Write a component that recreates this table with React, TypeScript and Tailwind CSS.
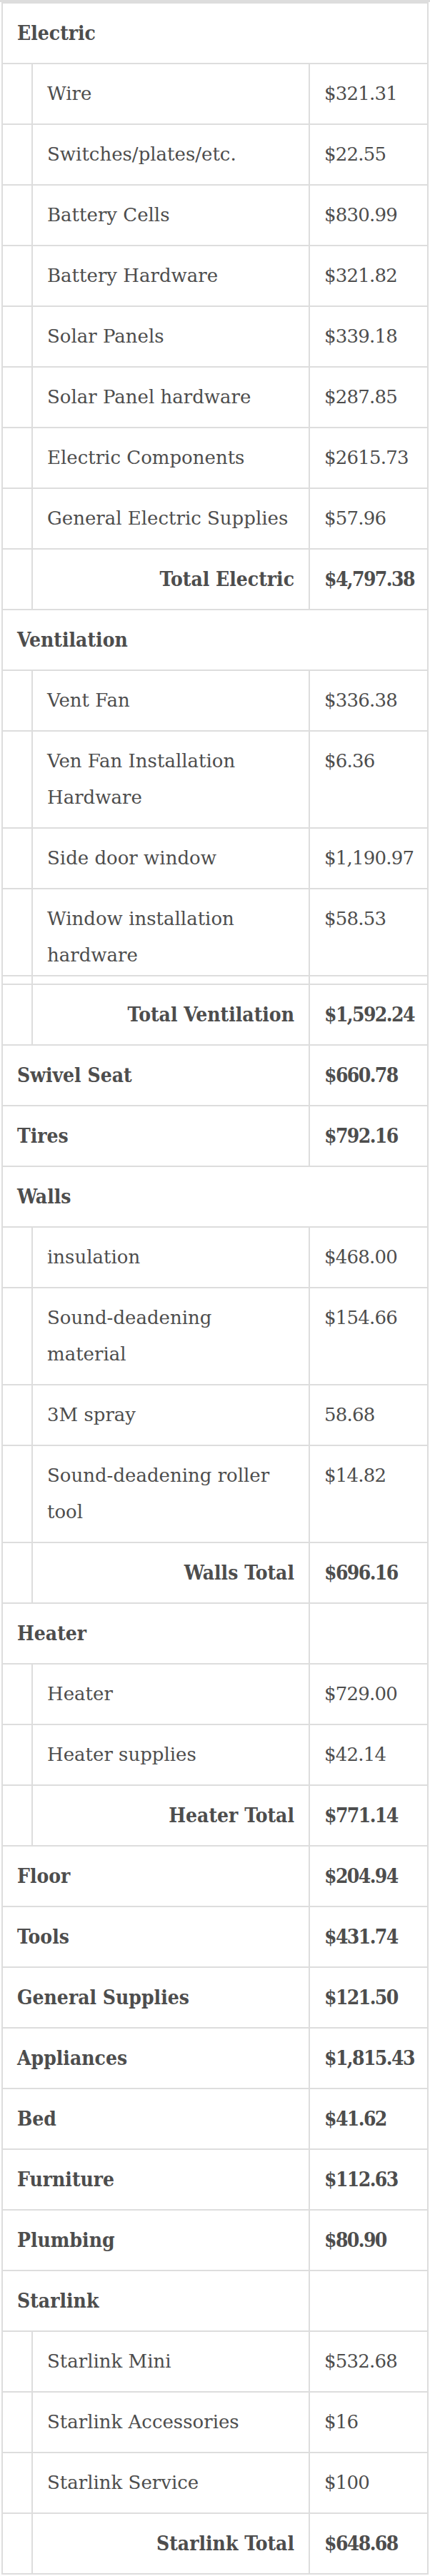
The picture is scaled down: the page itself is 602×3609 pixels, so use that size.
type Row =
  | { kind: "section"; label: string; valueCell?: boolean }
  | { kind: "item"; label: string; value: string; tail?: boolean }
  | { kind: "total"; label: string; value: string }
  | { kind: "single"; label: string; value: string }
  | { kind: "spacer" };

const ROWS: Row[] = [
  { kind: "section", label: "Electric" },
  { kind: "item", label: "Wire", value: "$321.31" },
  { kind: "item", label: "Switches/plates/etc.", value: "$22.55" },
  { kind: "item", label: "Battery Cells", value: "$830.99" },
  { kind: "item", label: "Battery Hardware", value: "$321.82" },
  { kind: "item", label: "Solar Panels", value: "$339.18" },
  { kind: "item", label: "Solar Panel hardware", value: "$287.85" },
  { kind: "item", label: "Electric Components", value: "$2615.73" },
  { kind: "item", label: "General Electric Supplies", value: "$57.96" },
  { kind: "total", label: "Total Electric", value: "$4,797.38" },
  { kind: "section", label: "Ventilation" },
  { kind: "item", label: "Vent Fan", value: "$336.38" },
  { kind: "item", label: "Ven Fan Installation Hardware", value: "$6.36" },
  { kind: "item", label: "Side door window", value: "$1,190.97" },
  { kind: "item", label: "Window installation hardware", value: "$58.53", tail: true },
  { kind: "spacer" },
  { kind: "total", label: "Total Ventilation", value: "$1,592.24" },
  { kind: "single", label: "Swivel Seat", value: "$660.78" },
  { kind: "single", label: "Tires", value: "$792.16" },
  { kind: "section", label: "Walls" },
  { kind: "item", label: "insulation", value: "$468.00" },
  { kind: "item", label: "Sound-deadening material", value: "$154.66" },
  { kind: "item", label: "3M spray", value: "58.68" },
  { kind: "item", label: "Sound-deadening roller tool", value: "$14.82" },
  { kind: "total", label: "Walls Total", value: "$696.16" },
  { kind: "section", label: "Heater", valueCell: true },
  { kind: "item", label: "Heater", value: "$729.00" },
  { kind: "item", label: "Heater supplies", value: "$42.14" },
  { kind: "total", label: "Heater Total", value: "$771.14" },
  { kind: "single", label: "Floor", value: "$204.94" },
  { kind: "single", label: "Tools", value: "$431.74" },
  { kind: "single", label: "General Supplies", value: "$121.50" },
  { kind: "single", label: "Appliances", value: "$1,815.43" },
  { kind: "single", label: "Bed", value: "$41.62" },
  { kind: "single", label: "Furniture", value: "$112.63" },
  { kind: "single", label: "Plumbing", value: "$80.90" },
  { kind: "section", label: "Starlink", valueCell: true },
  { kind: "item", label: "Starlink Mini", value: "$532.68" },
  { kind: "item", label: "Starlink Accessories", value: "$16" },
  { kind: "item", label: "Starlink Service", value: "$100" },
  { kind: "total", label: "Starlink Total", value: "$648.68" },
];

// widths tuned so the slab-serif fallbacks line up with the original cells
const CELL = "border-2 border-[#dddddd] px-[20px] pt-[16px] pb-[16px] align-top";
const BOLD = "font-['DejaVu_Serif_Condensed','DejaVu_Serif',serif] font-bold text-[28px]";
const REG = "font-['DejaVu_Serif',serif] text-[26px]";
const BOLD_VALUE = `${BOLD} tracking-[-1.6px] whitespace-nowrap`;
const REG_VALUE = `${REG} tracking-[-0.8px] whitespace-nowrap`;

function TableRow({ row }: { row: Row }) {
  switch (row.kind) {
    case "section":
      return (
        <tr>
          <td colSpan={row.valueCell ? 2 : 3} className={`${CELL} ${BOLD}`}>
            {row.label}
          </td>
          {row.valueCell && <td className={CELL} />}
        </tr>
      );
    case "item":
      return (
        <tr>
          <td className={CELL} />
          <td className={`${CELL} ${REG} ${row.tail ? "!pb-[2px]" : ""}`}>{row.label}</td>
          <td className={`${CELL} ${REG_VALUE} ${row.tail ? "!pb-[2px]" : ""}`}>{row.value}</td>
        </tr>
      );
    case "total":
      return (
        <tr>
          <td className={CELL} />
          <td className={`${CELL} ${BOLD} text-right`}>{row.label}</td>
          <td className={`${CELL} ${BOLD_VALUE}`}>{row.value}</td>
        </tr>
      );
    case "single":
      return (
        <tr>
          <td colSpan={2} className={`${CELL} ${BOLD}`}>
            {row.label}
          </td>
          <td className={`${CELL} ${BOLD_VALUE}`}>{row.value}</td>
        </tr>
      );
    case "spacer":
      return (
        <tr className="h-[12px]">
          <td className="border-2 border-[#dddddd] border-t-[#ececec] p-0" />
          <td className="border-2 border-[#dddddd] border-t-[#ececec] p-0" />
          <td className="border-2 border-[#dddddd] border-t-[#ececec] p-0" />
        </tr>
      );
  }
}

export default function App() {
  return (
    <div className="min-h-[3609px] w-[602px] bg-white text-[#4d4d4d] leading-[51px]">
      <div className="h-[3px] bg-[#dddddd]" />
      <table className="ml-[2px] w-[598px] table-fixed border-collapse">
        <colgroup>
          <col className="w-[42px]" />
          <col className="w-[388px]" />
          <col />
        </colgroup>
        <tbody>
          {ROWS.map((row, i) => (
            <TableRow key={i} row={row} />
          ))}
        </tbody>
      </table>
    </div>
  );
}
